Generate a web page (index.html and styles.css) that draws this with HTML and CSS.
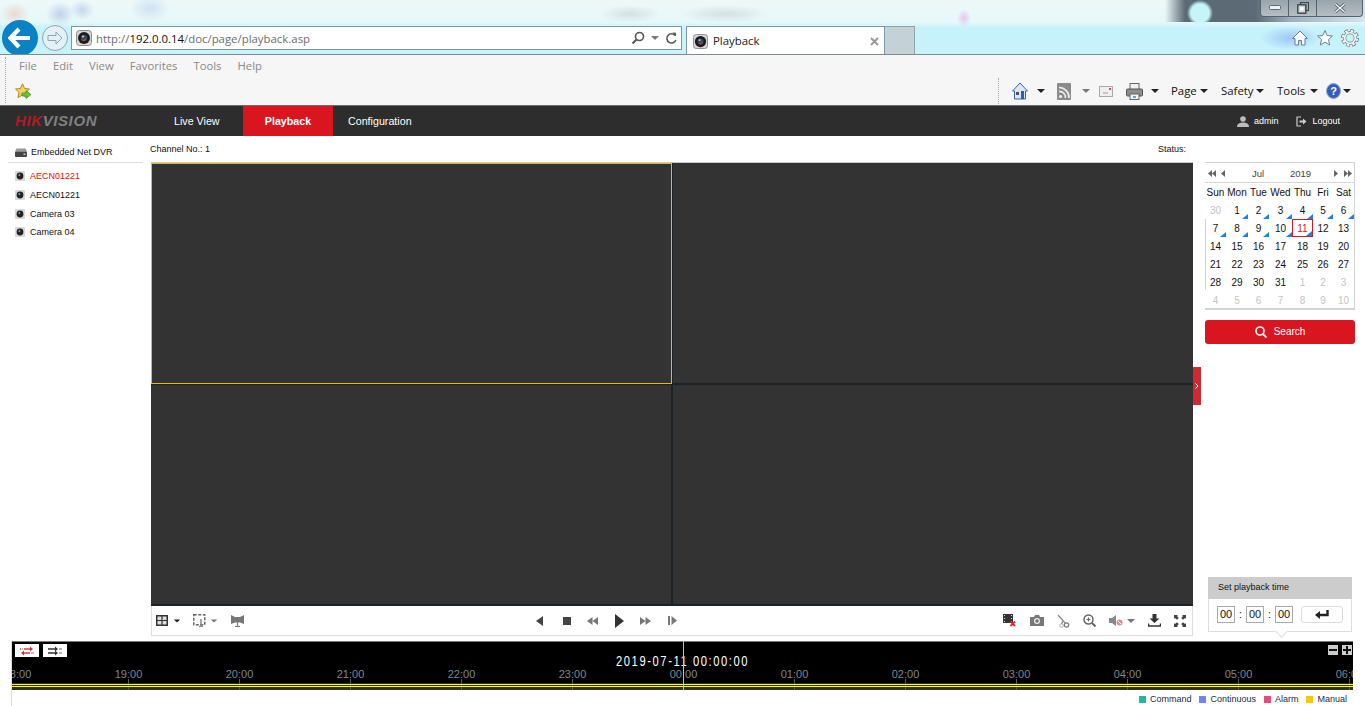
FILE: index.html
```html
<!DOCTYPE html>
<html lang="en">
<head>
	<meta charset="UTF-8">
	<title>Playback</title>
	<link rel="stylesheet" href="styles.css">
</head>
<body>
	<svg class="sprite" width="0" height="0">
		<symbol id="lens" viewBox="0 0 16 16">
			<rect x="0.5" y="0.5" width="15" height="15" rx="3" fill="#d6d6d6" stroke="#8d8d8d"/>
			<circle cx="8" cy="8" r="6" fill="#1b1b1b"/>
			<circle cx="8" cy="8" r="3.2" fill="#3a4a66"/>
			<path d="M6 10a3 3 0 0 0 4-1" stroke="#d33" stroke-width="1.2" fill="none"/>
			<circle cx="7" cy="6.5" r="1" fill="#ddd"/>
		</symbol>
		<symbol id="cam" viewBox="0 0 10 10">
			<rect width="10" height="10" rx="1" fill="#d8d8d8"/>
			<circle cx="5" cy="5" r="3.4" fill="#222"/>
			<circle cx="4.3" cy="4" r="1" fill="#999"/>
		</symbol>
	</svg>

	<div class="chrome">
		<div class="win-row">
			<div class="win-btns">
				<span class="win-btn win-min"><svg width="12" height="6"><rect x="0.5" y="0.5" width="11" height="4" rx="1" fill="#eef2f3" stroke="#5d6870"/></svg></span>
				<span class="win-btn win-max"><svg width="12" height="12" viewBox="0 0 12 12"><rect x="3.5" y="0.5" width="8" height="8" fill="none" stroke="#3d464c" stroke-width="1.2"/><rect x="0.8" y="2.8" width="8" height="8.4" fill="#cfd6da" stroke="#3d464c" stroke-width="1.4"/><rect x="3.2" y="5.2" width="3.2" height="3.4" fill="#fff"/></svg></span>
				<span class="win-btn win-close"><svg width="12" height="10" viewBox="0 0 12 10"><path d="M1.5 1L10.5 9M10.5 1L1.5 9" stroke="#4e585e" stroke-width="3"/><path d="M1.5 1L10.5 9M10.5 1L1.5 9" stroke="#f4f6f7" stroke-width="1.4"/></svg></span>
			</div>
		</div>
		<div class="nav-row">
			<span class="back-btn"><svg width="24" height="22" viewBox="0 0 24 22"><path d="M11 2L2.5 11L11 20M3 11H22" fill="none" stroke="#fff" stroke-width="4.2"/></svg></span>
			<span class="fwd-btn"><svg width="16" height="14" viewBox="0 0 16 14"><path d="M9 1L15 7L9 13V9.5H1V4.5H9Z" fill="none" stroke="#8fa4b0"/></svg></span>
			<div class="addr">
				<svg class="favicon" width="16" height="16"><use href="#lens"/></svg>
				<span class="url">http://<b>192.0.0.14</b>/doc/page/playback.asp</span>
				<span class="addr-tools">
					<svg width="14" height="14" viewBox="0 0 14 14"><circle cx="8.5" cy="5.5" r="4" fill="none" stroke="#555" stroke-width="1.6"/><path d="M5.5 8.5L1.5 12.5" stroke="#555" stroke-width="2"/></svg>
					<i class="caret caret-gray"></i>
					<svg width="12" height="13" viewBox="0 0 12 13"><path d="M10 3.5A4.6 4.6 0 1 0 10.8 8" fill="none" stroke="#555" stroke-width="1.5"/><path d="M7.5 0.5L11 0.8V4.6Z" fill="#555"/></svg>
				</span>
			</div>
			<div class="ie-tab">
				<svg class="favicon" width="15" height="15"><use href="#lens"/></svg>
				<span class="ie-tab-name">Playback</span>
				<svg class="ie-tab-x" width="9" height="9" viewBox="0 0 9 9"><path d="M1 1L8 8M8 1L1 8" stroke="#9a9a9a" stroke-width="2"/></svg>
			</div>
			<div class="new-tab"></div>
			<div class="ie-tools">
				<svg width="18" height="18" viewBox="0 0 18 18"><path d="M9 2L1.5 9.5H4V16H7.5V11.5H10.5V16H14V9.5H16.500Z" fill="#f4fafc" stroke="#6f8088"/></svg>
				<svg width="18" height="18" viewBox="0 0 18 18"><path d="M9 1.500L11.200 6.500L16.500 7L12.500 10.600L13.700 16L9 13.200L4.300 16L5.500 10.600L1.500 7L6.800 6.500Z" fill="#f8fcfd" stroke="#6f8088"/></svg>
				<svg width="18" height="18" viewBox="0 0 18 18" fill="none"><circle cx="9" cy="9" r="7" stroke="#6f8088" stroke-width="4" stroke-dasharray="3.500 2"/><circle cx="9" cy="9" r="5.300" stroke="#6f8088" stroke-width="3"/><circle cx="9" cy="9" r="7" stroke="#f4fafc" stroke-width="2.400" stroke-dasharray="2.300 3.200" stroke-dashoffset="-0.600"/><circle cx="9" cy="9" r="5.300" stroke="#f4fafc" stroke-width="1.600"/></svg>
			</div>
		</div>
	</div>

	<div class="ie-bar">
		<div class="grip"></div>
		<div class="ie-bar-main">
			<ul class="menu">
				<li>File</li>
				<li>Edit</li>
				<li>View</li>
				<li>Favorites</li>
				<li>Tools</li>
				<li>Help</li>
			</ul>
			<div class="cmd-row">
				<svg class="fav-star" width="17" height="17" viewBox="0 0 17 17"><path d="M7.500 0.800L9.600 5.500L14.500 6L10.900 9.300L11.900 14.500L7.500 12L3 14.500L4 9.300L0.500 6L5.400 5.500Z" fill="#f5d35c" stroke="#b9862a"/><path d="M7 10H11V7.500L16 11.500L11 15.500V13H7Z" fill="#63c92f" stroke="#3d8f1c" stroke-width="0.7"/></svg>
				<div class="cmds">
					<span class="cmd-sep"></span>
					<svg class="cmd-home" width="16" height="18" viewBox="0 0 16 18"><path d="M8 1L0.500 9H2.500V17H13.500V9H15.500Z" fill="#dce6ee" stroke="#3a66b0"/><rect x="9" y="9" width="3" height="8" fill="#2b5fb5"/><rect x="4" y="10" width="3" height="3" fill="#46515c"/></svg>
					<i class="caret cmd-c1"></i>
					<svg class="cmd-rss" width="14" height="17" viewBox="0 0 14 17"><rect width="14" height="17" rx="1" fill="#8b8b8b"/><circle cx="3.500" cy="13.500" r="1.600" fill="#eee"/><path d="M2 8.500A6 6 0 0 1 8.500 15M2 4.500A10 10 0 0 1 12 15" fill="none" stroke="#eee" stroke-width="1.700"/></svg>
					<i class="caret caret-gray cmd-c2"></i>
					<svg class="cmd-mail" width="14" height="11" viewBox="0 0 14 11"><rect x="0.500" y="0.500" width="13" height="10" fill="#efefef" stroke="#a8a8a8"/><path d="M4 7H9" stroke="#999"/><rect x="10" y="2" width="2" height="2" fill="#e44"/></svg>
					<svg class="cmd-print" width="17" height="17" viewBox="0 0 17 17"><rect x="4" y="0.500" width="9" height="6" fill="#f2f2f2" stroke="#666"/><rect x="0.500" y="6" width="16" height="7" rx="1" fill="#8d8d8d" stroke="#555"/><rect x="4" y="11" width="9" height="5.500" fill="#f2f2f2" stroke="#666"/><rect x="7" y="13" width="3" height="2" fill="#5aa6d6"/></svg>
					<i class="caret cmd-c3"></i>
					<span class="cmd-name cmd-page">Page</span><i class="caret cmd-cn"></i>
					<span class="cmd-name cmd-safety">Safety</span><i class="caret cmd-cn"></i>
					<span class="cmd-name cmd-tools">Tools</span><i class="caret cmd-cn"></i>
					<svg class="cmd-help" width="15" height="16" viewBox="0 0 15 16"><ellipse cx="7.500" cy="8" rx="7" ry="7.500" fill="#2f5fc0" stroke="#9aa6b4"/><text x="7.500" y="12" text-anchor="middle" class="help-q">?</text></svg>
					<i class="caret cmd-c4"></i>
				</div>
			</div>
		</div>
	</div>

	<div class="topnav">
		<div class="logo"><span class="logo-red">HIK</span>VISION</div>
		<ul class="nav-tabs">
			<li class="tab-live">Live View</li>
			<li class="selected">Playback</li>
			<li>Configuration</li>
		</ul>
		<div class="user">
			<svg width="12" height="11" viewBox="0 0 12 11"><circle cx="6" cy="3" r="2.800" fill="#bdbdbd"/><path d="M0 11C0 7.500 3 6.500 6 6.500S12 7.500 12 11Z" fill="#bdbdbd"/></svg>
			<span>admin</span>
			<svg class="logout-icon" width="11" height="11" viewBox="0 0 11 11"><path d="M5 1H1V10H5" fill="none" stroke="#ccc" stroke-width="1.200"/><path d="M3.500 4.500H7V2.500L10.500 5.500L7 8.500V6.500H3.500Z" fill="#ccc"/></svg>
			<span>Logout</span>
		</div>
	</div>

	<div class="page">
		<div class="tree">
			<div class="tree-head">
				<svg width="12" height="9" viewBox="0 0 12 9"><path d="M1.500 0.500H10.500L12 3.500H0Z" fill="#999"/><rect y="3.500" width="12" height="5.500" rx="1" fill="#444"/><rect x="8.500" y="5.500" width="2" height="1.500" fill="#ccc"/></svg>
				<span>Embedded Net DVR</span>
			</div>
			<ul class="tree-list">
				<li class="selected"><svg width="10" height="10"><use href="#cam"/></svg>AECN01221</li>
				<li><svg width="10" height="10"><use href="#cam"/></svg>AECN01221</li>
				<li><svg width="10" height="10"><use href="#cam"/></svg>Camera 03</li>
				<li><svg width="10" height="10"><use href="#cam"/></svg>Camera 04</li>
			</ul>
		</div>

		<div class="center">
			<div class="info-row">
				<span>Channel No.: 1</span>
				<span>Status:</span>
			</div>
			<div class="video">
				<div class="cell selected"></div>
				<div class="cell"></div>
				<div class="cell"></div>
				<div class="cell"></div>
			</div>
			<div class="toolbar">
				<div class="tool-group tool-left">
					<svg width="12" height="11" viewBox="0 0 12 11"><rect x="0.750" y="0.750" width="10.500" height="9.500" fill="#ddd" stroke="#333" stroke-width="1.500"/><path d="M6 1V10M1 5.500H11" stroke="#333" stroke-width="1.200"/></svg>
					<i class="caret tool-caret"></i>
					<svg class="tool-fit" width="13" height="13" viewBox="0 0 13 13"><rect x="0.750" y="0.750" width="11" height="10" fill="none" stroke="#666" stroke-width="1.500" stroke-dasharray="3 1.500"/><path d="M8 5V12M6 12.500H10" stroke="#888" stroke-width="1.500"/></svg>
					<i class="caret caret-gray tool-caret"></i>
					<svg class="tool-mon" width="13" height="12" viewBox="0 0 13 12"><path d="M0 0L4 2H9L13 0V9L9 7.500H4L0 9Z" fill="#777"/><path d="M6.500 7V11M4 11.500H9" stroke="#777" stroke-width="1.200"/></svg>
				</div>
				<div class="tool-group tool-play">
					<svg width="8" height="10" viewBox="0 0 8 10"><path d="M7 0V10L0 5Z" fill="#444"/></svg>
					<svg width="8" height="8" viewBox="0 0 8 8"><rect width="8" height="8" fill="#444"/></svg>
					<svg width="11" height="8" viewBox="0 0 11 8"><path d="M5.500 0V8L0 4ZM11 0V8L5.500 4Z" fill="#777"/></svg>
					<svg width="9" height="14" viewBox="0 0 9 14"><path d="M0 0L9 7L0 14Z" fill="#333"/></svg>
					<svg width="11" height="8" viewBox="0 0 11 8"><path d="M0 0L5.500 4L0 8ZM5.500 0L11 4L5.500 8Z" fill="#777"/></svg>
					<svg width="9" height="9" viewBox="0 0 9 9"><rect width="2" height="9" fill="#777"/><path d="M3.500 0L9 4.500L3.500 9Z" fill="#777"/></svg>
				</div>
				<div class="tool-group tool-right">
					<svg class="tool-rec" width="13" height="13" viewBox="0 0 13 13"><rect width="10" height="9" fill="#333"/><path d="M1 1.500H2M1 4.500H2M1 7.500H2M8 1.500H9M8 4.500H9M8 7.500H9" stroke="#ddd"/><path d="M7.500 7.500L12 12M12 7.500L7.500 12" stroke="#e0252b" stroke-width="1.800"/></svg>
					<svg width="14" height="11" viewBox="0 0 14 11"><path d="M0 2H4L5 0H9L10 2H14V11H0Z" fill="#777"/><circle cx="7" cy="6" r="3" fill="#eee"/><circle cx="7" cy="6" r="1.800" fill="#777"/></svg>
					<svg width="13" height="14" viewBox="0 0 13 14"><circle cx="9.500" cy="11" r="2.200" fill="none" stroke="#777" stroke-width="1.200"/><circle cx="4.500" cy="11.500" r="1.800" fill="none" stroke="#aaa"/><path d="M1 1L8.500 9.500M6 7L4.500 9.800" stroke="#888" stroke-width="1.200"/></svg>
					<svg width="13" height="13" viewBox="0 0 13 13"><circle cx="5.500" cy="5.500" r="4.500" fill="none" stroke="#666" stroke-width="1.500"/><path d="M3.500 5.500H7.500M5.500 3.500V7.500" stroke="#666" stroke-width="1.200"/><path d="M9 9L12.500 12.500" stroke="#666" stroke-width="2"/></svg>
					<svg width="14" height="11" viewBox="0 0 14 11"><path d="M0 3H3L7 0V11L3 8H0Z" fill="#888"/><circle cx="10.500" cy="7.500" r="3" fill="#e98a90"/><path d="M9 6L12 9" stroke="#fff"/></svg>
					<i class="caret caret-gray tool-vol"></i>
					<svg class="tool-dl" width="13" height="13" viewBox="0 0 13 13"><path d="M4.500 0H8.500V4.500H11.500L6.500 9L1.500 4.500H4.500Z" fill="#333"/><path d="M0.500 9.500V12H12.500V9.500" fill="none" stroke="#333" stroke-width="1.500"/></svg>
					<svg class="tool-full" width="12" height="12" viewBox="0 0 12 12"><path d="M0 0H4L3 1L4.800 3L3 4.800L1 3L0 4ZM12 0V4L11 3L9 4.800L7.200 3L9 1L8 0ZM0 12V8L1 9L3 7.200L4.800 9L3 11L4 12ZM12 12H8L9 11L7.200 9L9 7.200L11 9L12 8Z" fill="#444"/></svg>
				</div>
			</div>
			<div class="handle"><svg width="4" height="6" viewBox="0 0 4 6"><path d="M0.500 0.500L3 3L0.500 5.500" fill="none" stroke="#fff"/></svg></div>
		</div>

		<div class="side">
			<div class="calendar">
				<div class="cal-head">
					<span class="cal-arrows cal-left"><svg width="8" height="7" viewBox="0 0 8 7"><path d="M4 0V7L0 3.500ZM8 0V7L4 3.500Z" fill="#666"/></svg><svg width="4" height="7" viewBox="0 0 4 7"><path d="M4 0V7L0 3.500Z" fill="#666"/></svg></span>
					<span class="cal-month">Jul</span>
					<span class="cal-year">2019</span>
					<span class="cal-arrows cal-right"><svg width="4" height="7" viewBox="0 0 4 7"><path d="M0 0V7L4 3.500Z" fill="#666"/></svg><svg width="8" height="7" viewBox="0 0 8 7"><path d="M0 0V7L4 3.500ZM4 0V7L8 3.500Z" fill="#666"/></svg></span>
				</div>
				<div class="cal-grid">
					<b>Sun</b><b>Mon</b><b>Tue</b><b>Wed</b><b>Thu</b><b>Fri</b><b>Sat</b>
					<span class="off">30</span><span class="rec">1</span><span class="rec">2</span><span class="rec">3</span><span class="rec">4</span><span class="rec">5</span><span class="rec">6</span>
					<span class="rec">7</span><span class="rec">8</span><span class="rec">9</span><span class="rec">10</span><span class="rec today">11</span><span>12</span><span>13</span>
					<span>14</span><span>15</span><span>16</span><span>17</span><span>18</span><span>19</span><span>20</span>
					<span>21</span><span>22</span><span>23</span><span>24</span><span>25</span><span>26</span><span>27</span>
					<span>28</span><span>29</span><span>30</span><span>31</span><span class="off">1</span><span class="off">2</span><span class="off">3</span>
					<span class="off">4</span><span class="off">5</span><span class="off">6</span><span class="off">7</span><span class="off">8</span><span class="off">9</span><span class="off">10</span>
				</div>
			</div>
			<div class="search-btn">
				<svg width="12" height="12" viewBox="0 0 12 12"><circle cx="5" cy="5" r="4" fill="none" stroke="#fff" stroke-width="1.600"/><path d="M8 8L11.500 11.500" stroke="#fff" stroke-width="1.800"/></svg>
				<span>Search</span>
			</div>
			<div class="set-time">
				<div class="set-time-head">Set playback time</div>
				<div class="set-time-body">
					<span class="time-box">00</span><span class="time-sep">:</span>
					<span class="time-box">00</span><span class="time-sep">:</span>
					<span class="time-box">00</span>
					<span class="enter-btn"><svg width="14" height="9" viewBox="0 0 14 9"><path d="M12.500 0V5H4" fill="none" stroke="#222" stroke-width="2.400"/><path d="M5 1V9L0 5Z" fill="#222"/></svg></span>
				</div>
			</div>
		</div>
	</div>

	<div class="timeline">
		<div class="tl-black">
			<div class="tl-top">
				<div class="tl-btns">
					<span class="tl-btn"><svg width="14" height="10" viewBox="0 0 14 10"><path d="M4 3H11" stroke="#d0343a" stroke-width="1.400"/><path d="M10 0.500L13 3L10 5.500Z" fill="#d0343a"/><path d="M3 7H10" stroke="#d0343a" stroke-width="1.400"/><path d="M4 4.500L1 7L4 9.500Z" fill="#d0343a"/><path d="M0 3H2.500M11.500 7H14" stroke="#d0343a" stroke-width="1.400" stroke-dasharray="1 1"/></svg></span>
					<span class="tl-btn"><svg width="14" height="10" viewBox="0 0 14 10"><path d="M0 3H8M0 7H8" stroke="#333" stroke-width="1.400"/><path d="M7 0.500L10 3L7 5.500ZM7 4.500L10 7L7 9.500Z" fill="#333"/><path d="M11.500 3H14M11.500 7H14" stroke="#333" stroke-width="1.400" stroke-dasharray="1 1"/></svg></span>
				</div>
				<div class="tl-zoom">
					<span class="tl-z"><svg width="8" height="8"><rect y="3" width="8" height="2" fill="#111"/></svg></span>
					<span class="tl-z"><svg width="8" height="8"><path d="M0 3H3V0H5V3H8V5H5V8H3V5H0Z" fill="#111"/></svg></span>
				</div>
			</div>
			<div class="tl-hours">
				<span>18:00</span><span>19:00</span><span>20:00</span><span>21:00</span><span>22:00</span><span>23:00</span><span>00:00</span><span>01:00</span><span>02:00</span><span>03:00</span><span>04:00</span><span>05:00</span><span>06:00</span>
			</div>
		</div>
		<div class="tl-band">
			<div class="tl-rec"></div>
		</div>
		<div class="tl-date">2019-07-11 00:00:00</div>
		<div class="tl-head"></div>
		<div class="legend">
			<span><i class="sw-cmd"></i>Command</span>
			<span><i class="sw-con"></i>Continuous</span>
			<span><i class="sw-alm"></i>Alarm</span>
			<span><i class="sw-man"></i>Manual</span>
		</div>
	</div>
</body>
</html>
```

FILE: styles.css
```css
*{
	margin: 0;
	padding: 0;
	box-sizing: border-box;
}
ul{
	list-style: none;
}
i{
	display: block;
}
svg{
	display: block;
	flex: none;
}
html, body{
	width: 1365px;
	height: 706px;
	overflow: hidden;
}
body{
	background: #fff;
	color: #111;
	font-family: "Liberation Sans", Arial, sans-serif;
	font-size: 9px;
}
.sprite{
	position: absolute;
}
.caret{
	width: 0;
	height: 0;
	border-left: 4px solid transparent;
	border-right: 4px solid transparent;
	border-top: 4px solid #222;
}
.caret-gray{
	border-top-color: #777;
}

/* browser frame */
.chrome{
	height: 55px;
	border-bottom: 1px solid #7c8c90;
	overflow: hidden;
	background:
		radial-gradient(circle 13px at 1200px 13px, #c5f5f8 0, #c5f5f8 70%, rgba(197,245,248,0) 100%),
		radial-gradient(ellipse 30px 12px at 1290px 38px, #9fc6f6 0, rgba(160,200,246,0) 100%),
		radial-gradient(ellipse 7px 9px at 964px 18px, #e8c4f0 0, rgba(232,196,240,0) 100%),
		radial-gradient(ellipse 30px 9px at 630px 14px, #d3e0e6 0, rgba(211,224,230,0) 100%),
		radial-gradient(ellipse 44px 9px at 725px 14px, #d3e0e6 0, rgba(211,224,230,0) 100%),
		radial-gradient(ellipse 14px 12px at 15px 14px, #ead9d2 0, rgba(234,217,210,0) 100%),
		radial-gradient(ellipse 14px 12px at 60px 14px, #bfd1ec 0, rgba(191,209,236,0) 100%),
		radial-gradient(ellipse 12px 10px at 82px 10px, #c6d7ef 0, rgba(198,215,239,0) 100%),
		radial-gradient(ellipse 20px 14px at 150px 8px, #d0e2f2 0, rgba(208,226,242,0) 100%),
		linear-gradient(90deg, rgba(90,106,118,0) 1165px, #5b6a75 1185px, #5b6a75 1255px, #9db0bc 1290px, #d3e5ee 1365px) 0 0 / 100% 22px no-repeat,
		linear-gradient(#eef8f9 0, #e6f8f8 22px, #c6f2fb 28px, #c8f3fb 54px);
}
.win-row{
	height: 17px;
	display: flex;
	justify-content: flex-end;
	padding-right: 2px;
}
.win-btns{
	display: flex;
	height: 17px;
	width: 103px;
	border: 1px solid #55636c;
	border-top: 0;
	border-radius: 0 0 4px 4px;
	background: linear-gradient(#98a4ab, #b4bec4);
}
.win-btn{
	display: flex;
	align-items: center;
	justify-content: center;
	border-right: 1px solid #55636c;
}
.win-min{
	width: 28px;
}
.win-max{
	width: 28px;
}
.win-close{
	flex: 1;
	border-right: 0;
}
.nav-row{
	display: flex;
	align-items: flex-start;
	padding: 3px 0 0 2px;
}
.back-btn{
	width: 36px;
	height: 36px;
	border-radius: 50%;
	background: #0a82c4;
	display: flex;
	align-items: center;
	justify-content: center;
}
.fwd-btn{
	width: 26px;
	height: 26px;
	margin: 5px 0 0 4px;
	border: 1px solid #8fa7b3;
	border-radius: 50%;
	background: #e3f1f6;
	display: flex;
	align-items: center;
	justify-content: center;
}
.addr{
	width: 611px;
	height: 24px;
	margin: 6px 0 0 3px;
	padding: 0 4px 0 4px;
	background: #fff;
	border: 1px solid #7c98a4;
	display: flex;
	align-items: center;
}
.url{
	margin-left: 4px;
	font-family: "Open Sans", sans-serif;
	font-size: 11.4px;
	color: #6d6d6d;
}
.url b{
	font-weight: normal;
	color: #111;
}
.addr-tools{
	margin-left: auto;
	display: flex;
	align-items: center;
	gap: 6px;
}
.ie-tab{
	width: 199px;
	height: 29px;
	margin: 6px 0 0 4px;
	padding: 0 5px 0 6px;
	background: #fff;
	border: 1px solid #7c98a4;
	border-bottom: 0;
	display: flex;
	align-items: center;
}
.ie-tab-name{
	margin: 0 0 2px 5px;
	font-family: "Open Sans", sans-serif;
	font-size: 11.4px;
	color: #222;
}
.ie-tab-x{
	margin-left: auto;
}
.new-tab{
	width: 30px;
	height: 29px;
	margin-top: 6px;
	background: #c2d2d6;
	border: 1px solid #8ea2a8;
	border-left: 0;
	border-bottom: 0;
}
.ie-tools{
	margin: 9px 6px 0 auto;
	display: flex;
	gap: 7px;
}
.ie-bar{
	height: 50px;
	background: #f6f6f6;
	display: flex;
}
.grip{
	width: 1px;
	height: 46px;
	margin: 2px 0 0 5px;
	border-left: 1px dotted #aaa;
}
.ie-bar-main{
	flex: 1;
}
.menu{
	display: flex;
	padding: 0 0 2px 13px;
	height: 22px;
	align-items: center;
	font-family: "Open Sans", sans-serif;
	font-size: 11.3px;
	color: #8a8a8a;
}
.menu li{
	margin-right: 16px;
}
.cmd-row{
	height: 28px;
	display: flex;
	align-items: flex-start;
	font-family: "Open Sans", sans-serif;
	font-size: 11.4px;
}
.fav-star{
	margin: 6px 0 0 9px;
}
.cmds{
	margin-left: auto;
	display: flex;
	align-items: center;
	height: 28px;
	padding-right: 14px;
}
.cmd-sep{
	height: 26px;
	width: 1px;
	border-left: 1px dotted #aaa;
	margin-right: 13px;
}
.cmd-c1{
	margin-left: 9px;
}
.cmd-rss{
	margin-left: 12px;
}
.cmd-c2{
	margin-left: 11px;
}
.cmd-mail{
	margin-left: 9px;
}
.cmd-print{
	margin-left: 13px;
}
.cmd-c3{
	margin-left: 8px;
}
.cmd-cn{
	margin-left: 3px;
}
.cmd-c4{
	margin-left: 2px;
}
.cmd-name{
	margin: 0 0 2px 13px;
	white-space: nowrap;
}
.cmd-page{
	width: 26px;
	margin-left: 12px;
}
.cmd-safety{
	width: 32px;
}
.cmd-tools{
	width: 30px;
}
.cmd-help{
	margin-left: 8px;
}
.help-q{
	font-family: "Liberation Sans", sans-serif;
	font-weight: bold;
	font-size: 11px;
	fill: #fff;
}

/* app nav */
.topnav{
	height: 31px;
	background: #2d2d2d;
	border-top: 1px solid #6b6b6b;
	display: flex;
	align-items: stretch;
	color: #fff;
}
.logo{
	width: 155px;
	padding-left: 15px;
	line-height: 30px;
	font-size: 15px;
	font-weight: bold;
	font-style: italic;
	letter-spacing: 0.6px;
	color: #808080;
}
.logo-red{
	color: #b01a22;
}
.nav-tabs{
	display: flex;
	font-size: 10.7px;
}
.nav-tabs li{
	padding-left: 15px;
	line-height: 30px;
}
.nav-tabs .tab-live{
	width: 88px;
	padding-left: 19px;
}
.nav-tabs .selected{
	width: 90px;
	padding-left: 0;
	text-align: center;
	background: #d9161f;
	font-weight: bold;
}
.user{
	margin-left: auto;
	padding-right: 25px;
	display: flex;
	align-items: center;
	gap: 5px;
}
.logout-icon{
	margin-left: 13px;
}

/* page */
.page{
	height: 505px;
	display: flex;
}
.tree{
	width: 150px;
	padding-left: 8px;
}
.tree-head{
	width: 135px;
	height: 27px;
	border-bottom: 1px solid #ddd;
	padding: 6px 0 0 7px;
	display: flex;
	align-items: center;
	gap: 4px;
}
.tree-list{
	padding: 4px 0 0 7px;
}
.tree-list li{
	height: 18.7px;
	display: flex;
	align-items: center;
	gap: 5px;
}
.tree-list .selected{
	color: #f00;
}
.center{
	width: 1043px;
	position: relative;
}
.info-row{
	height: 26px;
	display: flex;
	justify-content: space-between;
	padding: 8px 7px 0 0;
}
.video{
	width: 1042px;
	height: 444px;
	margin-left: 1px;
	background: #1b2125;
	display: grid;
	grid-template-columns: 520px 520px;
	grid-template-rows: 220px 219px;
	gap: 2px;
	border-top: 1px solid #c8c8c8;
}
.cell{
	background: #333;
}
.cell.selected{
	margin: 0 -1px -1px 0;
	border: 1px solid #e6b62b;
}
.toolbar{
	width: 1042px;
	height: 30px;
	margin-left: 1px;
	border: 1px solid #ddd;
	border-top: 0;
	display: flex;
	align-items: center;
}
.tool-group{
	display: flex;
	align-items: center;
}
.tool-left{
	width: 375px;
	padding-left: 4px;
}
.tool-caret{
	margin-left: 5px;
	transform: scale(0.8);
}
.tool-fit{
	margin-left: 12px;
}
.tool-fit + .tool-caret{
	margin-left: 4px;
}
.tool-mon{
	margin-left: 13px;
}
.tool-play{
	display: grid;
	grid-template-columns: repeat(6, 26.4px);
	justify-items: center;
}
.tool-right{
	margin-left: auto;
	padding-right: 6px;
	gap: 13px;
}
.tool-rec{
	margin-right: 1px;
}
.tool-vol{
	margin-left: -9px;
}
.handle{
	position: absolute;
	left: 1043px;
	top: 231px;
	width: 8px;
	height: 38px;
	background: #cf2a33;
	display: flex;
	align-items: center;
	justify-content: center;
}
.side{
	width: 150px;
	margin-left: 12px;
	padding: 26px 0 9px;
	display: flex;
	flex-direction: column;
	font-size: 10px;
}
.calendar{
	height: 148px;
	border: 1px solid #d4d4d4;
	border-width: 1px 1px 2px 0;
}
.cal-head{
	height: 20px;
	display: flex;
	align-items: center;
	border-bottom: 1px solid #d4d4d4;
	padding: 2px 0 0 3px;
	font-size: 9.5px;
	color: #444;
}
.cal-arrows{
	display: flex;
}
.cal-left{
	gap: 5px;
}
.cal-right{
	gap: 6px;
}
.cal-month{
	margin-left: 27px;
	width: 38px;
}
.cal-year{
	width: 44px;
}
.cal-grid{
	display: grid;
	grid-template-columns: 21px 22px 21px 23px 21px 20px 21px;
	grid-auto-rows: 18px;
	text-align: center;
	line-height: 20px;
	background: linear-gradient(#d4d4d4, #d4d4d4) 0 36px / 1px 71px no-repeat;
}
.cal-grid b{
	font-weight: normal;
}
.cal-grid span{
	position: relative;
}
.cal-grid .off{
	color: #c4c4c4;
}
.cal-grid .rec::after{
	content: "";
	position: absolute;
	right: 0;
	bottom: 0;
	border-left: 6px solid transparent;
	border-bottom: 5px solid #1584e6;
}
.cal-grid .today{
	border: 1px solid #d9161f;
	color: #d9161f;
	line-height: 18px;
}
.search-btn{
	height: 24px;
	margin-top: 10px;
	padding-bottom: 1px;
	background: #d9161f;
	border-radius: 3px;
	color: #fff;
	display: flex;
	align-items: center;
	justify-content: center;
	gap: 7px;
}
.set-time{
	width: 144px;
	height: 55px;
	margin: auto 0 0 3px;
	border: 1px solid #ddd;
	position: relative;
}
.set-time::after{
	content: "";
	position: absolute;
	left: 68px;
	bottom: -5px;
	width: 8px;
	height: 8px;
	background: #fff;
	border-right: 1px solid #ddd;
	border-bottom: 1px solid #ddd;
	transform: rotate(45deg);
}
.set-time-head{
	height: 22px;
	margin: -1px -1px 0;
	padding-left: 10px;
	line-height: 20px;
	font-size: 9px;
	background: #ccc;
}
.set-time-body{
	padding: 7px 0 0 8px;
	display: flex;
	align-items: center;
	position: relative;
	z-index: 1;
}
.time-box{
	width: 18px;
	height: 17px;
	border: 1px solid #aaa;
	line-height: 15px;
	text-align: center;
	font-size: 11px;
}
.time-sep{
	width: 11px;
	text-align: center;
}
.enter-btn{
	width: 42px;
	height: 17px;
	margin-left: 8px;
	border: 1px solid #ddd;
	border-radius: 3px;
	display: flex;
	align-items: center;
	justify-content: center;
}

/* timeline */
.timeline{
	width: 1342px;
	height: 65px;
	margin-left: 11px;
	position: relative;
	border-left: 1px solid #ddd;
	overflow: hidden;
}
.tl-black{
	height: 42px;
	background: #000;
	border-top: 1px solid #777;
}
.tl-top{
	height: 25px;
	display: flex;
	justify-content: space-between;
	padding: 2px 1px 0 3px;
}
.tl-btns{
	display: flex;
	gap: 4px;
}
.tl-btn{
	width: 24px;
	height: 13px;
	background: #fff;
	display: flex;
	align-items: center;
	justify-content: center;
}
.tl-zoom{
	display: flex;
	gap: 4px;
	margin-top: 1px;
}
.tl-z{
	width: 10px;
	height: 10px;
	background: #ccc;
	display: flex;
	align-items: center;
	justify-content: center;
}
.tl-hours{
	display: flex;
	margin-left: -50px;
	color: #7a8894;
	font-size: 11px;
	line-height: 15px;
}
.tl-hours span{
	flex: none;
	width: 111px;
	text-align: center;
}
.tl-band{
	height: 7px;
	padding-top: 1px;
	background: #2d2d2d;
	position: relative;
}
.tl-band::before{
	content: "";
	position: absolute;
	left: 0;
	right: 0;
	top: -4px;
	height: 11px;
	background: repeating-linear-gradient(90deg, transparent 0, transparent 110px, #5a5a5a 110px, #5a5a5a 111px) 6px 0;
}
.tl-rec{
	height: 3px;
	border-top: 1px solid #ff0;
	border-bottom: 1px solid #ff0;
	position: relative;
}
.tl-date{
	position: absolute;
	left: 604px;
	top: 12px;
	color: #fff;
	font-size: 14px;
	letter-spacing: 1.97px;
	white-space: nowrap;
	transform: scaleX(0.8);
	transform-origin: left center;
}
.tl-head{
	position: absolute;
	left: 671px;
	top: 0;
	width: 1px;
	height: 49px;
	background: #f2c522;
}
.legend{
	height: 16px;
	display: flex;
	justify-content: flex-end;
	align-items: flex-start;
	gap: 8px;
	padding: 4px 6px 0 0;
	color: #1b2a44;
}
.legend span{
	display: flex;
	align-items: center;
	gap: 4px;
}
.legend i{
	width: 7px;
	height: 7px;
}
.sw-cmd{
	background: #1abc9c;
}
.sw-con{
	background: #6f86ee;
}
.sw-alm{
	background: #f0487e;
}
.sw-man{
	background: #f9c800;
}
```
